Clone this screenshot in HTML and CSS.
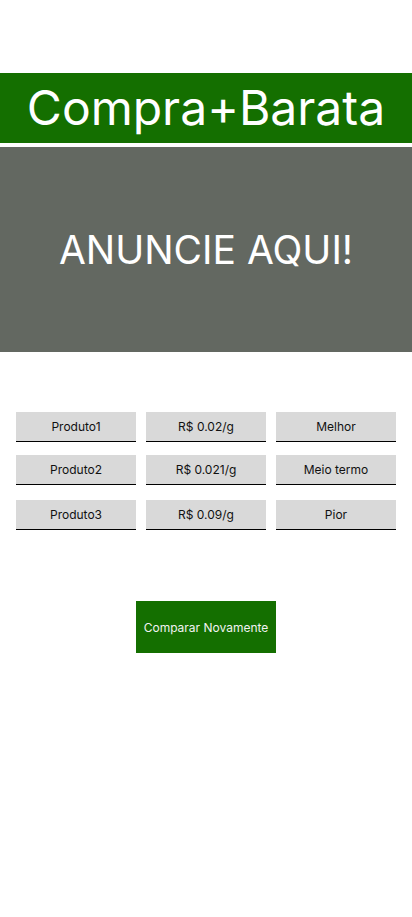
FILE: index.html
```html
<!DOCTYPE html>
<html lang="pt">
<head>
<meta charset="utf-8">
<title>Compra+Barata</title>
<link rel="stylesheet" href="styles.css">
</head>
<body>
<main class="page">
  <header class="brand">Compra+Barata</header>
  <section class="ad">ANUNCIE AQUI!</section>
  <section class="results">
    <div class="row">
      <div class="cell">Produto1</div>
      <div class="cell">R$ 0.02/g</div>
      <div class="cell">Melhor</div>
    </div>
    <div class="row row-2">
      <div class="cell">Produto2</div>
      <div class="cell">R$ 0.021/g</div>
      <div class="cell">Meio termo</div>
    </div>
    <div class="row row-3">
      <div class="cell">Produto3</div>
      <div class="cell">R$ 0.09/g</div>
      <div class="cell">Pior</div>
    </div>
  </section>
  <div class="actions">
    <button class="again" type="button">Comparar Novamente</button>
  </div>
</main>
</body>
</html>
```

FILE: styles.css
```css
* { box-sizing: border-box; }
html, body { margin: 0; padding: 0; background: #fff; }
body { font-family: Inter, "Noto Sans", sans-serif; width: 412px; min-height: 917px; }
.page { display: flex; flex-direction: column; padding-top: 73px; }
.brand {
  height: 70px;
  background: #146f00;
  color: #fff;
  font-size: 48px;
  line-height: 70px;
  text-align: center;
  font-weight: 400;
}
.ad {
  margin-top: 4px;
  height: 205px;
  background: #636861;
  color: #fff;
  font-size: 39px;
  display: flex;
  align-items: center;
  justify-content: center;
}
.results {
  margin-top: 60px;
  padding: 0 16px;
  display: flex;
  flex-direction: column;
}
.row { display: grid; grid-template-columns: repeat(3, 120px); column-gap: 10px; }
.row-2 { margin-top: 13px; }
.row-3 { margin-top: 15px; }
.cell {
  height: 30px;
  background: #d9d9d9;
  border-bottom: 1.5px solid #000;
  font-size: 12px;
  color: #111;
  display: flex;
  align-items: center;
  justify-content: center;
}
.actions { display: flex; justify-content: center; margin-top: 71px; }
.again {
  width: 140px;
  height: 52px;
  background: #146f00;
  color: #f2f2f2;
  border: none;
  font-family: Inter, "Noto Sans", sans-serif;
  font-size: 12px;
  padding: 0;
}
```
